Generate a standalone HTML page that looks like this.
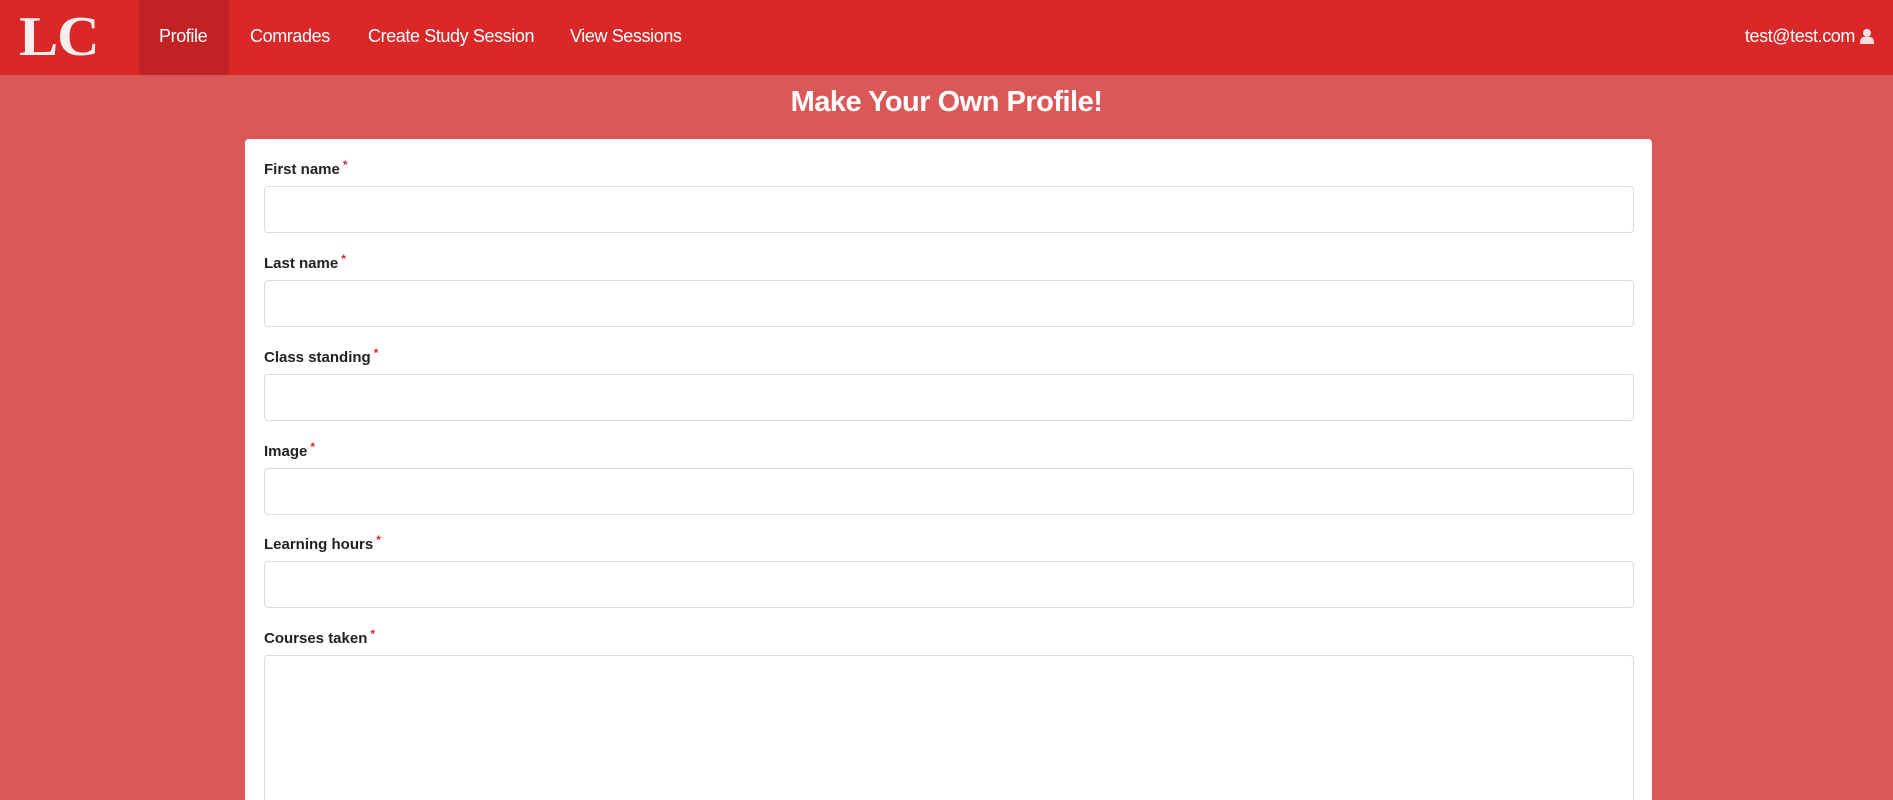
<!DOCTYPE html>
<html style="overflow:hidden;height:800px"><head><meta charset="utf-8"><style>
*{box-sizing:border-box;margin:0;padding:0}
body{width:1893px;height:800px;overflow:hidden;background:#da5858;font-family:"Liberation Sans",sans-serif;position:relative}
.nav{position:absolute;left:0;top:0;width:1893px;height:75px;background:#da2828;color:#fff}
.logo{position:absolute;left:19px;top:9px;font-family:"Liberation Serif",serif;font-weight:bold;font-size:56px;color:#f8eeee;letter-spacing:-1px;line-height:56px;transform:scaleX(1.05);transform-origin:left}
.act{position:absolute;left:139px;top:0;width:90px;height:75px;background:#c32225}
.ni{position:absolute;top:26px;font-size:18px;color:#fff;letter-spacing:-0.4px}
.email{position:absolute;right:38px;top:26px;font-size:18px;letter-spacing:-0.4px}
h1{position:absolute;left:0;width:1893px;top:86px;text-align:center;color:#fff;font-size:29px;font-weight:bold;letter-spacing:-0.5px}
.card{position:absolute;left:245px;top:139px;width:1407px;height:661px;background:#fff;border-radius:4px 4px 0 0;overflow:hidden}
.lab{position:absolute;left:19px;font-size:15px;font-weight:bold;color:#222}
.lab span{color:#db2828;font-size:12px;position:relative;top:-5px;margin-left:3px}
.inp{position:absolute;left:19px;width:1370px;height:47px;border:1px solid #dcdcdc;border-radius:4px}
</style></head><body>
<div class="nav">
<div class="logo">LC</div>
<div class="act"></div>
<div class="ni" style="left:159px">Profile</div>
<div class="ni" style="left:250px">Comrades</div>
<div class="ni" style="left:368px">Create Study Session</div>
<div class="ni" style="left:570px">View Sessions</div>
<div class="email">test@test.com</div>
<svg style="position:absolute;left:1860px;top:29px" width="14" height="15" viewBox="0 0 14 15"><circle cx="7" cy="4" r="4" fill="#f8e0e0"/><path d="M0 15 Q0 8 4 8 L10 8 Q14 8 14 15Z" fill="#f8e0e0"/></svg>
</div>
<h1>Make Your Own Profile!</h1>
<div class="card">
<div class="lab" style="top:22px">First name<span>*</span></div>
<div class="inp" style="top:47px"></div>
<div class="lab" style="top:116px">Last name<span>*</span></div>
<div class="inp" style="top:141px"></div>
<div class="lab" style="top:210px">Class standing<span>*</span></div>
<div class="inp" style="top:235px"></div>
<div class="lab" style="top:304px">Image<span>*</span></div>
<div class="inp" style="top:329px"></div>
<div class="lab" style="top:397px">Learning hours<span>*</span></div>
<div class="inp" style="top:422px"></div>
<div class="lab" style="top:491px">Courses taken<span>*</span></div>
<div class="inp" style="top:516px;height:145px;border-bottom:none;border-radius:4px 4px 0 0"></div>
</div>
</body></html>
